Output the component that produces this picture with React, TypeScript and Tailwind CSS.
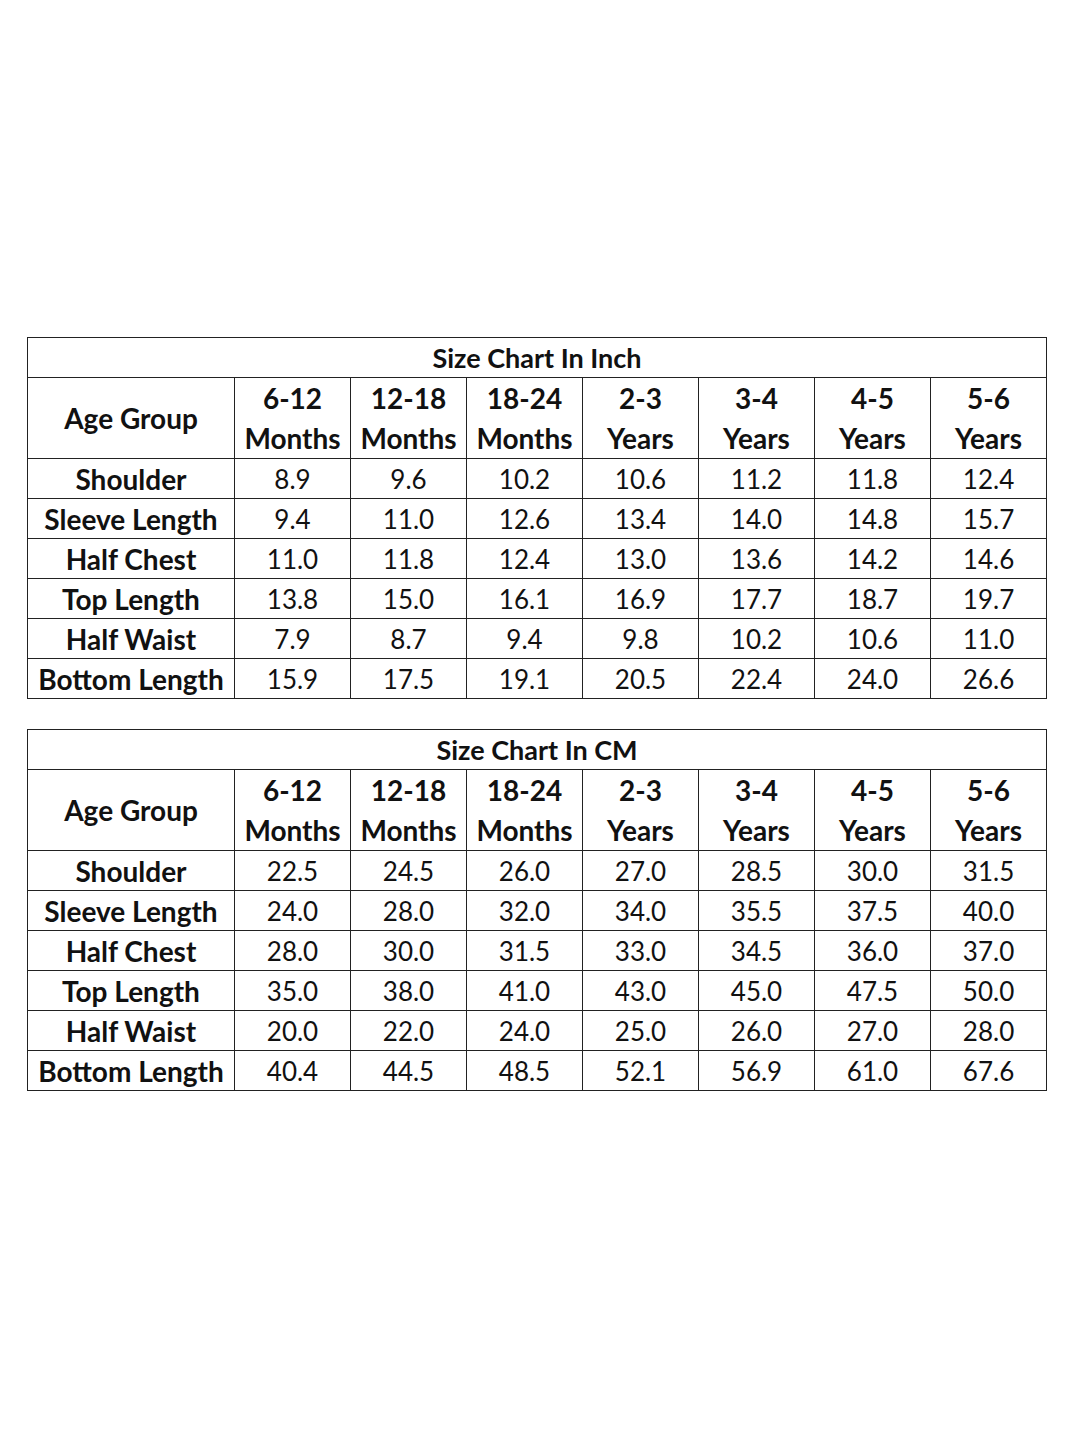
const headers = [
  ["6-12", "Months"],
  ["12-18", "Months"],
  ["18-24", "Months"],
  ["2-3", "Years"],
  ["3-4", "Years"],
  ["4-5", "Years"],
  ["5-6", "Years"],
];

const inchRows: [string, string[]][] = [
  ["Shoulder", ["8.9", "9.6", "10.2", "10.6", "11.2", "11.8", "12.4"]],
  ["Sleeve Length", ["9.4", "11.0", "12.6", "13.4", "14.0", "14.8", "15.7"]],
  ["Half Chest", ["11.0", "11.8", "12.4", "13.0", "13.6", "14.2", "14.6"]],
  ["Top Length", ["13.8", "15.0", "16.1", "16.9", "17.7", "18.7", "19.7"]],
  ["Half Waist", ["7.9", "8.7", "9.4", "9.8", "10.2", "10.6", "11.0"]],
  ["Bottom Length", ["15.9", "17.5", "19.1", "20.5", "22.4", "24.0", "26.6"]],
];

const cmRows: [string, string[]][] = [
  ["Shoulder", ["22.5", "24.5", "26.0", "27.0", "28.5", "30.0", "31.5"]],
  ["Sleeve Length", ["24.0", "28.0", "32.0", "34.0", "35.5", "37.5", "40.0"]],
  ["Half Chest", ["28.0", "30.0", "31.5", "33.0", "34.5", "36.0", "37.0"]],
  ["Top Length", ["35.0", "38.0", "41.0", "43.0", "45.0", "47.5", "50.0"]],
  ["Half Waist", ["20.0", "22.0", "24.0", "25.0", "26.0", "27.0", "28.0"]],
  ["Bottom Length", ["40.4", "44.5", "48.5", "52.1", "56.9", "61.0", "67.6"]],
];

function SizeTable({ title, rows }: { title: string; rows: [string, string[]][] }) {
  return (
    <table className="w-[1020px] table-fixed border-collapse border border-[#444] text-[#111] text-[26px]">
      <colgroup>
        <col className="w-[207px]" />
        {headers.map((h) => (
          <col key={h[0]} className="w-[116px]" />
        ))}
      </colgroup>
      <thead>
        <tr className="h-[40px]">
          <th colSpan={8} className="border border-[#222] font-bold text-[27px] leading-[36px] p-0">
            {title}
          </th>
        </tr>
        <tr className="h-[81px]">
          <th className="border border-[#222] font-bold text-[28px] leading-[40px] p-0">Age Group</th>
          {headers.map((h) => (
            <th key={h[0]} className="border border-[#222] font-bold text-[28px] leading-[40px] p-0">
              <div>{h[0]}</div>
              <div>{h[1]}</div>
            </th>
          ))}
        </tr>
      </thead>
      <tbody>
        {rows.map(([label, vals]) => (
          <tr key={label} className="h-[40px]">
            <td className="border border-[#222] font-bold text-[28px] leading-[36px] text-center p-0 whitespace-nowrap">
              {label}
            </td>
            {vals.map((v, i) => (
              <td key={i} className="border border-[#222] text-center leading-[36px] p-0">
                {v}
              </td>
            ))}
          </tr>
        ))}
      </tbody>
    </table>
  );
}

export default function App() {
  return (
    <div
      className="w-[1080px] h-[1440px] bg-white pt-[337px] pl-[27px] flex flex-col gap-[30px]"
      style={{ fontFamily: "Lato, 'Open Sans', sans-serif" }}
    >
      <SizeTable title="Size Chart In Inch" rows={inchRows} />
      <SizeTable title="Size Chart In CM" rows={cmRows} />
    </div>
  );
}
